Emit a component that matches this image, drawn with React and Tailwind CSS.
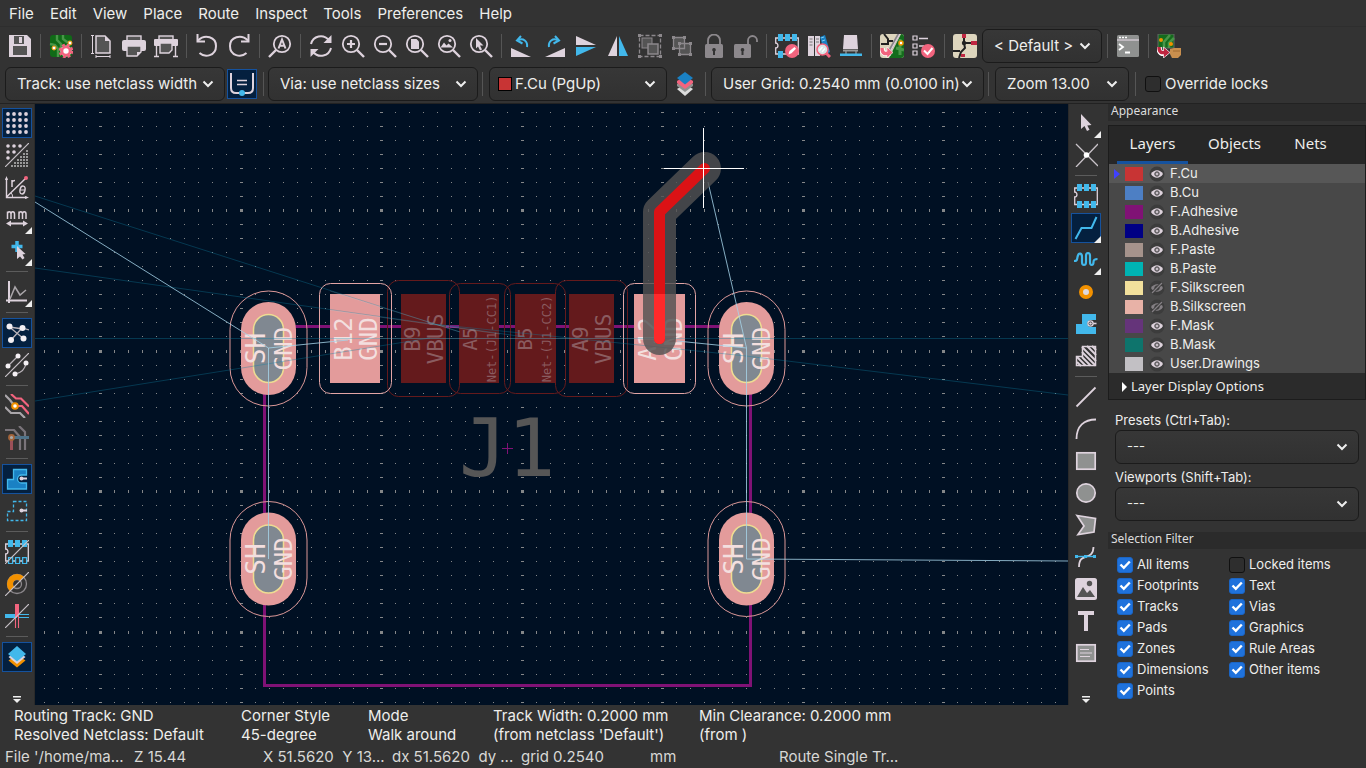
import React from 'react';

const L = '#ded3dd';
const B = '#42b8eb';
const P = '#f2647e';

function Icon({ children, className = 'w-6 h-6' }) {
  return (
    <svg viewBox="0 0 24 24" className={className} fill="none" aria-hidden="true">
      {children}
    </svg>
  );
}

const Lens = ({ children }) => (
  <Icon>
    <circle cx="10" cy="10" r="8.2" stroke={L} strokeWidth="1.8" />
    <path d="M16 16l7 7" stroke={L} strokeWidth="2.4" />
    {children}
  </Icon>
);

const Slash = () => <path d="M0 24L24 0" stroke="#c9c3c9" strokeWidth="1.2" />;

const icons = {
  save: (
    <Icon>
      <path d="M1 1h18l4 4v18H1z" fill={L} />
      <rect x="6" y="2" width="10" height="8" fill="#545454" />
      <rect x="11" y="3" width="3" height="6" fill={L} />
      <rect x="5" y="12" width="14" height="9" fill="#545454" />
    </Icon>
  ),
  board: (
    <Icon>
      <rect x="1" y="1" width="22" height="22" rx="3" fill="#106a17" />
      <path d="M8 1v5l4 4v4M14 1v4l4 3h5M1 10l5 1 3 4v8" stroke="#489648" strokeWidth="2.4" />
      <circle cx="5" cy="14" r="2" fill="#fff" stroke="#f29100" />
      <circle cx="21" cy="9" r="2" fill="#fff" stroke="#f29100" />
      <circle cx="17" cy="17" r="5.6" fill="#fff" stroke={P} strokeWidth="3.4" strokeDasharray="2.6 1.8" />
      <circle cx="17" cy="17" r="4" fill="#fff" stroke={P} strokeWidth="2.6" />
    </Icon>
  ),
  page: (
    <Icon>
      <path d="M6 2h9l5 5v12H6z" fill="#545454" stroke={L} strokeWidth="1.5" />
      <path d="M15 2v5h5z" fill={L} />
      <path d="M1 1.5h3M1 19.5h3M2.5 1v18M6 22.5h14M6 21v3M20 21v3" stroke={L} />
    </Icon>
  ),
  print: (
    <Icon>
      <rect x="5" y="2" width="14" height="5" fill="#545454" stroke={L} strokeWidth="1.4" />
      <rect x="0" y="6" width="24" height="11" rx="2" fill={L} />
      <path d="M5 12h14v6l-4 4H5z" fill="#545454" stroke={L} strokeWidth="1.4" />
      <path d="M19 18h-4v4z" fill={L} />
    </Icon>
  ),
  plot: (
    <Icon>
      <rect x="5" y="2" width="14" height="5" fill="#545454" stroke={L} strokeWidth="1.4" />
      <rect x="0" y="5" width="24" height="7" rx="1" fill={L} />
      <path d="M6 9h12v7l-3 3H6z" fill="#545454" stroke={L} strokeWidth="1.4" />
      <path d="M2.5 12v10M21.5 12v10M0 22.5h5M19 22.5h5" stroke={L} strokeWidth="1.4" />
    </Icon>
  ),
  undo: (
    <Icon>
      <path d="M3 6.5C10-.5 21 3 21 12c0 10-11 12-16.5 7" stroke={L} strokeWidth="2" />
      <path d="M2.5 0v7.5H10" stroke={L} strokeWidth="2" />
    </Icon>
  ),
  redo: (
    <Icon>
      <path d="M21 6.5C14-.5 3 3 3 12c0 10 11 12 16.5 7" stroke={L} strokeWidth="2" />
      <path d="M21.5 0v7.5H14" stroke={L} strokeWidth="2" />
    </Icon>
  ),
  find: (
    <Icon>
      <circle cx="14" cy="10" r="8.2" stroke={L} strokeWidth="1.8" />
      <path d="M8 16l-7 7" stroke={L} strokeWidth="2.4" />
      <path d="M10.5 14.5L14 5.5l3.5 9M11.5 11.7h5" stroke={L} strokeWidth="2" />
    </Icon>
  ),
  refresh: (
    <Icon>
      <path d="M2 10C4 2 14-1 20.5 6.5M22 14C20 22 10 25 3.5 17.5" stroke={L} strokeWidth="2" />
      <path d="M22.500 1v8h-8zM1.500 23v-8h8z" fill={L} />
    </Icon>
  ),
  zoomIn: <Lens><path d="M10 6v8M6 10h8" stroke={L} strokeWidth="2.2" /></Lens>,
  zoomOut: <Lens><path d="M6 10h8" stroke={L} strokeWidth="2.2" /></Lens>,
  zoomFit: <Lens><path d="M6 5h5.5l2.5 2.5V15H6z" fill={L} /></Lens>,
  zoomObj: <Lens><path d="M3.5 13.5l3.5-5 2.5 3 2-2 4.5 4z" fill={L} /><circle cx="13" cy="6.5" r="1.5" fill={L} /></Lens>,
  zoomSel: <Lens><path d="M7 4l7.5 7.5h-3.5l2 4-2 1-2-4-2 2z" fill={L} /></Lens>,
  ccw: (
    <Icon>
      <path d="M1 14v9h20z" fill={L} />
      <path d="M17 13c1-6-4-9-8.5-7" stroke={B} strokeWidth="2" />
      <path d="M11 2L7 6.5l5.5 3" stroke={B} strokeWidth="2" />
    </Icon>
  ),
  cw: (
    <Icon>
      <path d="M23 14v9H3z" fill={L} />
      <path d="M7 13c-1-6 4-9 8.5-7" stroke={B} strokeWidth="2" />
      <path d="M13 2l4 4.5-5.5 3" stroke={B} strokeWidth="2" />
    </Icon>
  ),
  flip: <Icon><path d="M2 2v9h20z" fill={L} /><path d="M2 22v-9h20z" fill={B} /></Icon>,
  mirror: <Icon><path d="M2 22h9V2z" fill={L} /><path d="M22 22h-9V2z" fill={B} /></Icon>,
  group: (
    <Icon>
      <rect x="1.5" y="1.5" width="21" height="21" stroke="#8c888c" strokeWidth="1.3" strokeDasharray="4 2" />
      <path d="M0 0h3v3H0zM21 0h3v3h-3zM0 21h3v3H0zM21 21h3v3h-3z" fill="#8c888c" />
      <rect x="4" y="4" width="10" height="10" fill="#545454" stroke="#8c888c" />
      <rect x="10" y="10" width="10" height="10" fill="#545454" stroke="#8c888c" strokeWidth="1.5" />
    </Icon>
  ),
  ungroup: (
    <Icon>
      <path d="M3.5 3.5h11v11h-11zM9.5 9.5h11v11h-11z" fill="#545454" stroke="#8c888c" strokeWidth="1.3" />
      <path d="M2 2h3v3H2zM13 2h3v3h-3zM2 13h3v3H2zM8 8h3v3H8zM19 8h3v3h-3zM8 19h3v3H8zM19 19h3v3h-3z" fill="#8c888c" />
    </Icon>
  ),
  lock: (
    <Icon>
      <path d="M6 12V6.5a6 6 0 0112 0V12" stroke="#8c888c" strokeWidth="1.8" />
      <rect x="3" y="10" width="18" height="14" rx="1.5" fill="#8c888c" />
      <path d="M12 14a1.8 1.8 0 011 3.3V21h-2v-3.7A1.8 1.8 0 0112 14z" fill="#333" />
    </Icon>
  ),
  unlock: (
    <Icon>
      <path d="M14 12V6.500a4.500 4.500 0 019 0V8" stroke="#8c888c" strokeWidth="1.8" />
      <rect x="0" y="10" width="17" height="14" rx="1.5" fill="#8c888c" />
      <path d="M8.5 14a1.8 1.8 0 011 3.3V21h-2v-3.7A1.8 1.8 0 018.5 14z" fill="#333" />
    </Icon>
  ),
  fpEdit: (
    <Icon>
      <path d="M.7 4v5c3 0 3 5 0 5v6h22.600V4z" stroke={L} strokeWidth="1.3" />
      <path d="M3 0h5v7H3zM10 0h5v7h-5zM17 0h5v7h-5zM3 17h5v7H3z" fill={B} />
      <circle cx="17" cy="17" r="7" fill={P} />
      <path d="M13.5 20.5l1-3.5 5-4 1.5 1.7-4.5 4.6z" fill="#fff" />
    </Icon>
  ),
  libs: (
    <Icon>
      <path d="M1 2h6v20H1zM8 2h5v20H8z" fill={L} />
      <path d="M2.5 5h3M2.5 8h3M9 5h3M9 8h3M2.5 11h3" stroke="#777" />
      <path d="M13 3l5-2 5 17-5 3z" fill="#1a81c4" />
      <path d="M14 4l3-1M15 7l3-1" stroke="#7fd0f5" />
      <path d="M19 19l4 4" stroke={P} strokeWidth="3" />
      <circle cx="15.5" cy="15.5" r="5.5" fill="#d8e6e8" stroke={P} strokeWidth="1.5" />
      <path d="M12.5 16.5l3-3.5M15 18l3-3.5" stroke="#fff" strokeWidth="1.3" />
    </Icon>
  ),
  model3d: (
    <Icon>
      <path d="M7 16v5M17 16v5" stroke="#888" strokeWidth="1.5" />
      <path d="M5 1h13l1 14H4z" fill={L} />
      <path d="M4 15.5h15v2H4z" fill="#999" />
      <path d="M1 19.5h22V22H1z" fill={B} />
    </Icon>
  ),
  updatePcb: (
    <Icon>
      <rect x="0" y="0" width="24" height="24" rx="3" fill="#ddd5bd" />
      <path d="M21 0a3 3 0 013 3v18a3 3 0 01-3 3H9z" fill="#146c1c" />
      <path d="M20 5v16M16 14l8 2" stroke="#489648" strokeWidth="3" />
      <path d="M4 0l4 5v5H1M8 7h5" stroke="#222" strokeWidth="2" />
      <path d="M19 0L10 16" stroke="#8a868a" strokeWidth="3" />
      <path d="M20 0L11 16" stroke={L} strokeWidth="1.3" />
      <circle cx="21" cy="9" r="2" fill="#fff" stroke="#f29100" strokeWidth="1.5" />
      <path d="M2 14c0 6 4 6 8 5" stroke="#fff" strokeWidth="5.5" />
      <path d="M7 13l6 5.5-6 5.5z" fill={P} stroke="#fff" strokeWidth=".6" />
      <path d="M2 14c0 6 3 6 7 5" stroke={P} strokeWidth="3.4" />
    </Icon>
  ),
  drc: (
    <Icon>
      <path d="M1 2h4v4H1zM1 10h4v4H1zM1 17h4v4H1z" stroke={L} strokeWidth="1.2" />
      <path d="M7 4.5h9M7 12h5" stroke={L} strokeWidth="1.5" />
      <circle cx="16" cy="17" r="7" fill={P} />
      <path d="M12 16.5l3.5 3.5 5-6" stroke="#fff" strokeWidth="2" />
    </Icon>
  ),
  schematic: (
    <Icon>
      <rect x="0" y="0" width="24" height="24" rx="3" fill="#ddd5bd" />
      <path d="M11 4v5l1 5-4 4-2 6M11 9h8M0 17h7" stroke="#222" strokeWidth="2" />
      <path d="M9 0h4v4H9zM18 7h6v4h-6zM8 20h4v3H8z" fill="#bf2641" />
      <circle cx="11" cy="9" r="2.2" fill="#222" />
    </Icon>
  ),
  console: (
    <Icon>
      <rect x="1" y="1" width="22" height="22" rx="1.5" fill="#8f9190" />
      <path d="M1 6h22" stroke={L} strokeWidth="1.2" />
      <path d="M3 3.5h2M6 3.5h2M9 3.5h2" stroke="#fff" strokeWidth="1.5" />
      <path d="M3 10l4 3-4 3M9 18.5h5" stroke="#fff" strokeWidth="1.8" />
    </Icon>
  ),
  plugin: (
    <Icon>
      <path d="M1 0h16v14H1z" fill="#146c1c" stroke="#666" />
      <path d="M7 14V8l6-7M12 14V9l5-5" stroke="#489648" strokeWidth="2.5" />
      <circle cx="4" cy="6" r="2" fill="#f29100" />
      <circle cx="14" cy="10" r="2" fill="#f29100" />
      <path d="M2 13c0 6 3 7 7 6" stroke="#fff" strokeWidth="5.5" />
      <path d="M6.5 13l6.5 5.5-6.5 5.5z" fill="#bf2641" stroke="#fff" strokeWidth=".7" />
      <path d="M2 13c0 6 3 6 6 5.5" stroke="#bf2641" strokeWidth="3.4" />
      <path d="M13 15l4-1h7v7l-3 3h-6l-2-4z" fill="#c98f4e" />
      <path d="M16 17h7" stroke="#a06a30" />
    </Icon>
  ),
  autoWidth: (
    <Icon>
      <path d="M1 1v15c0 4 2 5 5 5h12c3 0 5-1 5-5V1" stroke={L} strokeWidth="2" />
      <path d="M7 8.5h10M7 12.5h10" stroke={L} strokeWidth="1.3" />
      <circle cx="12" cy="21" r="3" fill={B} />
    </Icon>
  ),
  layerPair: (
    <Icon>
      <path d="M4 17l8-5 8 5-8 7z" fill="#dcdcdc" />
      <path d="M4 12l8-5 8 5v2l-8 6-8-6z" fill="#8f9190" />
      <path d="M4 9l8-5 8 5v2l-8 6-8-6z" fill={P} />
      <path d="M12 0l8 6-8 6.5L4 6z" fill="#1a81c4" />
    </Icon>
  ),
  grid: (
    <Icon>
      {[3, 9, 15, 21].map((y) => [3, 9, 15, 21].map((x) => <circle key={`${x}-${y}`} cx={x} cy={y} r="1.9" fill={L} />))}
    </Icon>
  ),
  gridOver: (
    <Icon>
      <path d="M3 3h.01M9 3h.01M15 3h.01M3 9h.01M9 9h.01M3 15h.01" stroke={L} strokeWidth="3.6" strokeLinecap="round" />
      {[[22, 7], [19, 10], [16, 13], [13, 16], [10, 19], [7, 22]].map(([x, y], i) => (
        <path key={i} d={`M${x} ${y}v${24 - y}`} stroke="#999" strokeWidth="2" strokeDasharray="2 1" />
      ))}
      <Slash />
    </Icon>
  ),
  polar: (
    <Icon>
      <path d="M1.5 3v19.5H22M1.5 22L21 3" stroke={L} strokeWidth="1.4" />
      <path d="M0 5l1.5-4L3 5zM20 21l4 1.5-4 1.5z" fill={L} />
      <path d="M7 12V5M7 7c1-1.5 2-1.5 3-1.5" stroke={L} strokeWidth="1.5" />
      <ellipse cx="17.5" cy="15" rx="2.5" ry="4" stroke={L} strokeWidth="1.4" transform="rotate(12 17.5 15)" />
      <path d="M15 15h5M6 18c1.5 1 1.5 3 1.5 4" stroke={L} />
      <circle cx="21" cy="3" r="2" fill={P} />
    </Icon>
  ),
  mm: (
    <Icon>
      <path d="M2.5 12V4.5M2.5 7c0-3 3.5-3 3.5 0v5M6 7c0-3 3.5-3 3.5 0v5M14 12V4.5M14 7c0-3 3.5-3 3.5 0v5M17.5 7c0-3 3.5-3 3.5 0v5" stroke={L} strokeWidth="1.5" />
      <path d="M5 16.5h14" stroke={L} strokeWidth="2" />
      <path d="M1 16.5l5-3v6zM23 16.5l-5-3v6z" fill={L} />
    </Icon>
  ),
  cursor: (
    <Icon>
      <path d="M12 2v11M6.5 7.5h11" stroke={B} strokeWidth="3.5" />
      <path d="M12 7v13l3-2.5 2.5 3 2-1.500-2-3.500 3-.5z" fill={L} />
    </Icon>
  ),
  plotLine: (
    <Icon>
      <path d="M4 1v22M1 20.5h21" stroke={L} strokeWidth="2" />
      <path d="M5 19l5-12 5 8 6-5" stroke="#aaa6aa" strokeWidth="1.5" />
    </Icon>
  ),
  ratsnest: (
    <Icon>
      <path d="M4.5 6l13.5 2M4.5 6L19 18M6 19L17 7l7 2" stroke="#b9b3b9" strokeWidth="1.3" />
      {[[4.5, 5.5], [17.5, 7], [6, 19], [18.5, 17.5]].map(([x, y]) => <circle key={x} cx={x} cy={y} r="3" fill="#f4f0f4" />)}
    </Icon>
  ),
  curved: (
    <Icon>
      <path d="M3 13l10-10M10 21c6-1 10-4 11-11" stroke="#b9b3b9" strokeWidth="1.3" />
      {[[3, 13], [13, 3], [10, 21], [21, 10]].map(([x, y]) => <circle key={x} cx={x} cy={y} r="2.5" fill="#f4f0f4" />)}
      <Slash />
    </Icon>
  ),
  dimNets: (
    <Icon>
      <path d="M6 0l5 4.5h5l8 8M10 12h7l7 8" stroke={P} strokeWidth="2.2" />
      <path d="M0 1l5 5 3 4M0 13l6 6h9l5 5" stroke="#aaa6aa" strokeWidth="2.2" />
      <circle cx="10" cy="12" r="2.8" fill="#fff" stroke="#f29100" strokeWidth="2" />
    </Icon>
  ),
  dimLayers: (
    <Icon>
      <path d="M0 4h9l6 7v13M14 0l6 6v18" stroke="#7a747a" strokeWidth="2.2" />
      <path d="M6.5 13v11" stroke="#9c5058" strokeWidth="3" />
      <path d="M9 11.5h15" stroke="#4f7288" strokeWidth="3" />
      <circle cx="6.5" cy="11.5" r="2.5" fill="#aaa" stroke="#a3643a" strokeWidth="1.8" />
    </Icon>
  ),
  zoneFill: (
    <Icon>
      <path d="M8.5 2.5h13V8h-5a4 4 0 000 8h5v6h-19V12.5h6z" fill="#1a81c4" stroke={B} strokeWidth="1.3" />
      <path d="M16 11.5h6" stroke={L} strokeWidth="2" />
      <circle cx="16.5" cy="11.5" r="2" fill={L} />
    </Icon>
  ),
  zoneOutline: (
    <Icon>
      <path d="M8.5 2.5h13v19h-19v-9h6z" stroke={B} strokeWidth="1.3" strokeDasharray="3 2" />
      <path d="M16 11.5h6" stroke={L} strokeWidth="2" />
      <circle cx="16.5" cy="11.5" r="2" fill={L} />
    </Icon>
  ),
  padOutline: (
    <Icon>
      <path d="M.7 4v5c3 0 3 5 0 5v7h22.600V4z" stroke={L} strokeWidth="1.3" />
      <path d="M3 0h5v7H3zM10 0h5v7h-5zM17 0h5v7h-5z" fill={B} />
      <path d="M3.600 17.600h4v6h-4zM10.600 17.600h4v6h-4zM17.600 17.600h4v6h-4z" fill="#333" stroke={B} strokeWidth="1.3" />
      <Slash />
    </Icon>
  ),
  viaOutline: (
    <Icon>
      <circle cx="12" cy="12" r="9.5" stroke="#8c888c" strokeWidth="1.3" />
      <circle cx="12" cy="12" r="4.5" stroke="#8c888c" strokeWidth="1.3" />
      <path d="M7 17A7 7 0 0117 7" stroke="#f29100" strokeWidth="6" />
      <Slash />
    </Icon>
  ),
  trackOutline: (
    <Icon>
      <path d="M0 12h12" stroke={B} strokeWidth="4" />
      <path d="M12 0v13" stroke={P} strokeWidth="4" />
      <path d="M13 10.5h11M13 13.5h11" stroke={B} strokeWidth="1.1" />
      <path d="M10.5 14v10M13.5 12v12" stroke={P} strokeWidth="1.1" />
      <Slash />
    </Icon>
  ),
  contrast: (
    <Icon>
      <path d="M3.500 15.500l8.500 7 8.500-7-8.500-6z" fill="#f29100" />
      <path d="M3.500 12l8.500 7 8.500-7-8.500-6z" fill={L} />
      <path d="M12 1l9 8-9 7.5L3 9z" fill={B} />
    </Icon>
  ),
  select: <Icon><path d="M7 3v15l3.500-3 2.500 5 2.500-1.300-2.200-4.200 4.200-.5z" fill={L} /></Icon>,
  highlight: (
    <Icon>
      <path d="M2 1l22 22M24 1L2 24" stroke="#c9c3c9" strokeWidth="1.3" />
      <circle cx="12.5" cy="12" r="2.8" fill="#fff" />
    </Icon>
  ),
  footprint: (
    <Icon>
      <path d="M.7 4v4c3 0 3 5 0 5v7.500h22.600V4z" stroke={L} strokeWidth="1.3" />
      <path d="M3 0h5v7H3zM10 0h5v7h-5zM17 0h5v7h-5zM3 17h5v7H3zM10 17h5v7h-5zM17 17h5v7h-5z" fill={B} />
    </Icon>
  ),
  route: <Icon><path d="M1.500 23l6-11h10l5-11" stroke={B} strokeWidth="2" /></Icon>,
  tune: (
    <Icon>
      <path d="M0 13c3 0 3-1 3.500-4C4.500 4 8 5 8 9v5c0 4 4 4 4 0V8c0-4 4-4 4 0v6c0 4 3.500 4 3.500 0 0-2 1-3 4-3" stroke={B} strokeWidth="2.2" />
    </Icon>
  ),
  via: <Icon><circle cx="12" cy="12" r="5" fill="#ded9de" stroke="#f29100" strokeWidth="4" /></Icon>,
  zone: (
    <Icon>
      <path d="M8 2h14v6h-5a3.500 3.500 0 000 7h5v7H2V12h6z" fill={B} />
      <path d="M16.500 11.500h6" stroke={L} strokeWidth="1.6" />
      <circle cx="16.5" cy="11.5" r="2.6" fill="#333" stroke={L} strokeWidth="1.3" />
      <circle cx="16.5" cy="11.5" r="1.3" fill={L} />
    </Icon>
  ),
  ruleArea: (
    <Icon>
      <path d="M8.5 2.5h13v19h-19v-9h6z" stroke={L} strokeWidth="1.5" />
      <path d="M8 3l14 14M8 8l13.500 13.500M13 2l9 9M18 2l4 4M8 13l8.500 8.500M3 13l8.500 8.500M3 18l4 4" stroke={L} strokeWidth="2" />
    </Icon>
  ),
  line: <Icon><path d="M2.500 21.500l19-19" stroke={L} strokeWidth="1.8" /></Icon>,
  arc: <Icon><path d="M2.500 22C2.500 9 10 2.500 22 2.500" stroke={L} strokeWidth="1.8" /></Icon>,
  rect: <Icon><rect x="2.8" y="3.8" width="18.4" height="16.4" fill="#8f9190" stroke={L} strokeWidth="1.7" /></Icon>,
  circle: <Icon><circle cx="12" cy="12" r="9.2" fill="#8f9190" stroke={L} strokeWidth="1.7" /></Icon>,
  polygon: <Icon><path d="M3 2.500l18.500 3L20 19 4 21.500 10 13z" fill="#8f9190" stroke={L} strokeWidth="1.7" /></Icon>,
  bezier: (
    <Icon>
      <path d="M5 22C5 6 19 17 19.500 2" stroke={L} strokeWidth="1.8" />
      <path d="M2 11.500h20" stroke={B} strokeWidth="1.4" />
      <path d="M1 10h3v3H1zM10 10h3v3h-3zM19 10h3v3h-3z" fill={B} />
    </Icon>
  ),
  image: (
    <Icon>
      <rect x="1" y="1" width="22" height="22" rx="2.5" fill={L} />
      <path d="M3 20l6-10 4 6 3-3 5 7z" fill="#545454" />
      <circle cx="15.5" cy="6.5" r="2.7" fill="#545454" />
    </Icon>
  ),
  text: <Icon><path d="M4 2h16v4h-6v16h-4V6H4z" fill={L} /></Icon>,
  textBox: (
    <Icon>
      <rect x="2.8" y="3.8" width="18.4" height="16.4" fill="#8f9190" stroke={L} strokeWidth="1.7" />
      <path d="M6 8.500h9M6 12h12M6 15.500h10" stroke={L} strokeWidth="1.1" />
    </Icon>
  ),
};

function Tool({ icon, label, active, more }) {
  return (
    <button type="button" aria-label={label} className="relative flex h-8 w-8 shrink-0 items-center justify-center">
      <span className={active ? 'flex h-[30px] w-[30px] items-center justify-center border border-[#15529e] bg-[#04203f]' : 'flex'}>
        {icons[icon]}
      </span>
      {more && (
        <svg viewBox="0 0 7 7" className="absolute right-px bottom-px h-[7px] w-[7px]" aria-hidden="true">
          <path d="M7 0v7H0z" fill="#eee" />
        </svg>
      )}
    </button>
  );
}

const VSep = () => <div className="flex w-[9px] shrink-0 justify-center"><div className="h-6 w-px bg-[#555]" /></div>;
const HSep = () => <div className="flex h-[9px] w-full shrink-0 items-center justify-center"><div className="h-px w-[22px] bg-[#5c5c5c]" /></div>;

function Combo({ label, value, className, swatch }) {
  return (
    <div className={`relative flex shrink-0 items-center ${className}`}>
      <select
        aria-label={label}
        className={`h-[34px] w-full appearance-none rounded-md border border-[#1b1b1b] bg-linear-to-b from-[#373737] to-[#313131] ${swatch ? 'pl-[25px]' : 'pl-[11px]'} text-inherit outline-none`}
      >
        <option>{value}</option>
      </select>
      {swatch && <span className="absolute left-[9px] h-[14px] w-[14px] border border-black bg-[#c83434]" />}
      <svg viewBox="0 0 12 8" className="pointer-events-none absolute right-[11px] h-2 w-3" fill="none" aria-hidden="true">
        <path d="M1.500 1.500L6 6l4.500-4.500" stroke="#eee" strokeWidth="2" />
      </svg>
    </div>
  );
}

function Check({ label, checked }) {
  return (
    <label className="flex items-center gap-1">
      <span className="relative flex h-4 w-4">
        <input
          type="checkbox"
          defaultChecked={checked}
          className="peer h-4 w-4 appearance-none rounded-[3px] border border-[#101010] bg-[#2e2e2e] checked:border-[#1b65c4] checked:bg-[#1f72dc]"
        />
        <svg viewBox="0 0 16 16" className="pointer-events-none absolute inset-0 hidden h-4 w-4 peer-checked:block" fill="none" aria-hidden="true">
          <path d="M3.500 7.500L6.800 10.800l6-6.300" stroke="#fff" strokeWidth="2.4" />
        </svg>
      </span>
      <span className="whitespace-nowrap">{label}</span>
    </label>
  );
}

const topRow = [
  'save:Save', '|', 'board:Board setup', '|', 'page:Page settings', 'print:Print', 'plot:Plot', '|', 'undo:Undo', 'redo:Redo', '|',
  'find:Find', '|', 'refresh:Refresh', 'zoomIn:Zoom in', 'zoomOut:Zoom out', 'zoomFit:Zoom to fit', 'zoomObj:Zoom to objects', 'zoomSel:Zoom to selection', '|',
  'ccw:Rotate counterclockwise', 'cw:Rotate clockwise', 'flip:Mirror vertically', 'mirror:Mirror horizontally', 'group:Group', 'ungroup:Ungroup', 'lock:Lock', 'unlock:Unlock', '|',
  'fpEdit:Footprint editor', 'libs:Footprint library browser', 'model3d:3D viewer', '|', 'updatePcb:Update PCB from schematic', 'drc:Design rules checker', '|', 'schematic:Schematic editor',
];
const leftCol = [
  'grid:Show grid:a', 'gridOver:Grid overrides', 'polar:Polar coordinates', 'mm:Millimeters::m', 'cursor:Cursor shape::m', '|', 'plotLine:Line mode::m', '|',
  'ratsnest:Show ratsnest:a', 'curved:Curved ratsnest', '|', 'dimNets:Net colors', 'dimLayers:Inactive layers', '|', 'zoneFill:Zone fills:a', 'zoneOutline:Zone outlines', '|',
  'padOutline:Sketch pads', 'viaOutline:Sketch vias', 'trackOutline:Sketch tracks', '|', 'contrast:Layers manager:a',
];
const rightCol = [
  'select:Select::m', 'highlight:Highlight net', '|', 'footprint:Place footprint', 'route:Route track:a:m', 'tune:Tune length::m', 'via:Place via', 'zone:Draw zone', 'ruleArea:Draw rule area', '|',
  'line:Line', 'arc:Arc', 'rect:Rectangle', 'circle:Circle', 'polygon:Polygon', 'bezier:Bezier', 'image:Image', 'text:Text', 'textBox:Text box',
];

function tools(list, Sep) {
  return list.map((item, i) => {
    if (item === '|') return <Sep key={i} />;
    const [icon, label, active, more] = item.split(':');
    return <Tool key={i} icon={icon} label={label} active={active === 'a'} more={more === 'm'} />;
  });
}

const Overflow = () => (
  <button type="button" aria-label="More tools" className="mt-auto mb-px flex h-2 w-2">
    <svg viewBox="0 0 8 8" className="h-2 w-2" aria-hidden="true"><path d="M0 0h8v1.500H0zM0 3h8L4 7z" fill="#eee" /></svg>
  </button>
);

/* Board canvas */
const STEP = 14.05;
let gridPath = '';
for (let i = -5; i < 170; i++) {
  for (let j = -8; j < 110; j++) {
    const x = Math.round(100 + i * STEP);
    const y = Math.round(210 + j * STEP);
    const w = i % 10 === 0 ? 3 : 1;
    const h = j % 10 === 0 ? 3 : 1;
    gridPath += `M${x - (w - 1) / 2} ${y - (h - 1) / 2}h${w}v${h}h${-w}z`;
  }
}

const PadText = ({ x, y, size, fill = '#f3dfdf', children }) => (
  <text transform={`translate(${x} ${y}) rotate(-90)`} fontSize={size} fill={fill} textAnchor="middle">{children}</text>
);

const OvalPad = ({ x, y }) => (
  <g>
    <rect x={x - 38.5} y={y - 57.5} width="77" height="115" rx="38.5" fill="none" stroke="#dc9898" />
    <rect x={x - 27.5} y={y - 46.5} width="55" height="93" rx="27.5" fill="#e39b9b" />
    <rect x={x - 15} y={y - 34} width="30" height="68" rx="15" fill="#808891" stroke="#eedc92" strokeWidth="1.5" />
    <PadText x={x - 4} y={y} size="26">SH</PadText>
    <PadText x={x + 23.5} y={y} size="24">GND</PadText>
  </g>
);

function Pad({ x, w, cx, cw, tall, dim, num, net, numX, netX, numSize, netSize }) {
  return (
    <g>
      <rect x={cx} y={tall ? 280.5 : 283.5} width={cw} height={tall ? 116 : 110} rx="11" fill="none" stroke={dim ? '#641a1c' : '#e3a5a5'} />
      <rect x={x} y="294" width={w} height="89" fill={dim ? '#641a1c' : '#e39b9b'} />
      <PadText x={numX} y="339" size={numSize} fill={dim ? '#8a5c60' : '#f3dfdf'}>{num}</PadText>
      <PadText x={netX} y="339" size={netSize} fill={dim ? '#8a5c60' : '#f3dfdf'}>{net}</PadText>
    </g>
  );
}

function Board() {
  return (
    <svg className="block h-full w-full" role="img" aria-label="Board" fontFamily='"DejaVu Sans Mono", monospace'>
      <g transform="translate(-35 -104)">
        <path d={gridPath} fill="#858789" shapeRendering="crispEdges" />
        <rect x="264.5" y="326.5" width="486" height="359" fill="none" stroke="#801275" strokeWidth="3" />
        <OvalPad x={268.5} y={348.5} />
        <OvalPad x={746.5} y={348.5} />
        <OvalPad x={268.5} y={559} />
        <OvalPad x={746.5} y={559} />
        <Pad x={401} w={45} cx={387.5} cw={72} tall dim num="B9" net="VBUS" numX={420} netX={443} numSize="21" netSize="21" />
        <Pad x={460} w={39} cx={449.5} cw={61} dim num="A5" net="Net-(J1-CC1)" numX={477} netX={496} numSize="19" netSize="12" />
        <Pad x={515} w={40} cx={504.5} cw={61} dim num="B5" net="Net-(J1-CC2)" numX={532} netX={551} numSize="19" netSize="12" />
        <Pad x={569} w={45} cx={555.5} cw={72} tall dim num="A9" net="VBUS" numX={588} netX={611} numSize="21" netSize="21" />
        <Pad x={330} w={50} cx={319.5} cw={72} num="B12" net="GND" numX={352} netX={377} numSize="24" netSize="24" />
        <Pad x={634} w={51} cx={623.5} cw={72} num="A12" net="GND" numX={656} netX={682} numSize="24" netSize="24" />
        <g stroke="#0d7fa0" strokeOpacity="0.36" fill="none">
          <path d="M35 196L460 332M35 268L525 337M35 338.500H1068M35 401L430 338" />
          <path d="M432 324L600 341L746 356L1068 395" />
        </g>
        <g stroke="#ffffff" strokeOpacity="0.14" fill="none">
          <path d="M330 291L460 332M330 310L500 334M330 338.500H685" />
        </g>
        <g stroke="#a6d4ea" strokeOpacity="0.8" fill="none">
          <path d="M35 202L268.500 348L348 340M268.500 348V559M677 341L746.500 348V559L1068 561M708 182L746.500 348" />
        </g>
        <text x="459" y="476" fontSize="80" fill="#565656">J1</text>
        <path d="M502 448.500h11M507.500 443v11" stroke="#801275" />
        <path d="M659.500 338.500V212L704.500 168.500" fill="none" stroke="#525252" strokeOpacity="0.82" strokeWidth="33" strokeLinecap="round" strokeLinejoin="round" />
        <path d="M659.500 338.500V212L704.500 168.500" fill="none" stroke="#db1215" strokeWidth="11" strokeLinecap="round" strokeLinejoin="round" />
        <path d="M654 294h11v44.500a5.500 5.500 0 01-11 0z" fill="#ff2a2b" />
        <path d="M703.500 128v80M664 168.500h80" stroke="#fff" />
      </g>
    </svg>
  );
}

const layers = [
  ['F.Cu', 'bg-[#c83434]', true],
  ['B.Cu', 'bg-[#4d7fc4]', true],
  ['F.Adhesive', 'bg-[#801275]', true],
  ['B.Adhesive', 'bg-[#000084]', true],
  ['F.Paste', 'bg-[#a5938c]', true],
  ['B.Paste', 'bg-[#00b4b4]', true],
  ['F.Silkscreen', 'bg-[#f2e09c]', false],
  ['B.Silkscreen', 'bg-[#e8b2a7]', false],
  ['F.Mask', 'bg-[#65347a]', true],
  ['B.Mask', 'bg-[#0e746c]', true],
  ['User.Drawings', 'bg-[#c2c0c4]', true],
];

const Eye = ({ on }) => (
  <svg viewBox="0 0 16 16" className="h-4 w-4" fill="none" aria-hidden="true">
    <circle cx="8" cy="8" r="7.5" fill="#3c3c3c" />
    <path d="M2 8c3-5 9-5 12 0-3 5-9 5-12 0z" fill={on ? L : '#858085'} />
    <circle cx="8" cy="8" r="2.3" fill={on ? '#857f85' : '#3c3c3c'} stroke="#444" strokeWidth="0.8" />
    {on ? <circle cx="8" cy="8" r="1" fill={L} /> : <path d="M3 13L13 3" stroke="#3c3c3c" strokeWidth="3" />}
    {!on && <path d="M3 13L13 3" stroke="#858085" strokeWidth="1.3" />}
  </svg>
);

function PanelTitle({ children }) {
  return <h2 className="h-[17px] bg-[#2b2b2b] pl-[3px] font-['Noto_Sans',sans-serif] text-[12px] leading-[13px] text-[#ddd]">{children}</h2>;
}

function Appearance() {
  return (
    <aside className="flex w-[258px] shrink-0 flex-col text-[13px]">
      <PanelTitle>Appearance</PanelTitle>
      <div className="mt-1 border border-[#1c1c1c] bg-[#272727]">
        <div className="flex h-[38px] pl-2 font-['Noto_Sans',sans-serif] text-[15px]">
          <button type="button" className="w-[71px] border-b-[3px] border-[#15529e]">Layers</button>
          <button type="button" className="w-[93px] pb-[3px]">Objects</button>
          <button type="button" className="w-[59px] pb-[3px]">Nets</button>
        </div>
        <ul className="bg-[#484848]">
          {layers.map(([name, color, on], i) => (
            <li key={name} className={`flex h-[19px] items-center pl-[5px] ${i === 0 ? 'bg-[#575757]' : ''}`}>
              <svg viewBox="0 0 6 10" className="mr-[5px] h-[10px] w-[6px]" aria-hidden="true">
                {i === 0 && <path d="M0 0l6 5-6 5z" fill="#4040ff" />}
              </svg>
              <span className={`mr-[6px] h-[14px] w-[18px] ${color}`} />
              <button type="button" aria-label={`Toggle ${name}`} className="mr-[5px] flex">
                <Eye on={on} />
              </button>
              {name}
            </li>
          ))}
        </ul>
        <button type="button" className="flex h-[26px] w-full items-center gap-1 bg-[#2b2b2b] pt-[2px] pl-[13px] font-['Noto_Sans',sans-serif]">
          <svg viewBox="0 0 5 10" className="h-[10px] w-[5px]" aria-hidden="true"><path d="M0 0l5 5-5 5z" fill="#fff" /></svg>
          Layer Display Options
        </button>
      </div>
      <div className="flex flex-col px-[7px] pt-[10px] pb-[11px]">
        <span className="leading-5">Presets (Ctrl+Tab):</span>
        <Combo label="Presets (Ctrl+Tab)" value="---" className="w-full" />
        <span className="mt-[3px] leading-5">Viewports (Shift+Tab):</span>
        <Combo label="Viewports (Shift+Tab)" value="---" className="w-full" />
      </div>
      <PanelTitle>Selection Filter</PanelTitle>
      <div className="grid grid-cols-[112px_1fr] pt-[5px] pl-[9px] leading-[21px]">
        <Check label="All items" checked />
        <Check label="Locked items" />
        <Check label="Footprints" checked />
        <Check label="Text" checked />
        <Check label="Tracks" checked />
        <Check label="Vias" checked />
        <Check label="Pads" checked />
        <Check label="Graphics" checked />
        <Check label="Zones" checked />
        <Check label="Rule Areas" checked />
        <Check label="Dimensions" checked />
        <Check label="Other items" checked />
        <Check label="Points" checked />
      </div>
    </aside>
  );
}

const Message = ({ a, b, className }) => (
  <div className={`shrink-0 whitespace-nowrap ${className}`}>
    <div>{a}</div>
    <div>{b}</div>
  </div>
);

export default function App() {
  return (
    <div className="flex h-screen flex-col overflow-hidden bg-[#333] font-['Inter',sans-serif] text-[15px] text-[#eeeeec]">
      <nav className="flex h-[27px] shrink-0 items-center gap-4 border-b border-[#2e2e2e] pt-[2px] pl-[9px]">
        {['File', 'Edit', 'View', 'Place', 'Route', 'Inspect', 'Tools', 'Preferences', 'Help'].map((m) => (
          <button key={m} type="button">{m}</button>
        ))}
      </nav>
      <div className="flex h-[38px] shrink-0 items-center pl-1">
        {tools(topRow, VSep)}
        <Combo label="Layer preset" value="< Default >" className="mr-px ml-px w-[120px]" />
        <VSep />
        <Tool icon="console" label="Scripting console" />
        <VSep />
        <Tool icon="plugin" label="Plugin" />
      </div>
      <div className="flex h-[39px] shrink-0 items-center border-b border-[#222] pl-[5px]">
        <Combo label="Track width" value="Track: use netclass width" className="w-[220px]" />
        <span className="mx-px flex"><Tool icon="autoWidth" label="Use existing track width" active /></span>
        <VSep />
        <Combo label="Via size" value="Via: use netclass sizes" className="w-[210px]" />
        <VSep />
        <Combo label="Layer" value="F.Cu (PgUp)" className="mx-[2px] w-[178px]" swatch />
        <Tool icon="layerPair" label="Layer pair" />
        <VSep />
        <Combo label="Grid" value="User Grid: 0.2540 mm (0.0100 in)" className="ml-px w-[273px]" />
        <VSep />
        <Combo label="Zoom" value="Zoom 13.00" className="mx-[2px] w-[134px]" />
        <VSep />
        <div className="ml-[5px]"><Check label="Override locks" /></div>
      </div>
      <main className="flex min-h-0 flex-1">
        <div className="flex w-[35px] shrink-0 flex-col items-center border-r border-[#2a2a2a] pt-[3px]">
          {tools(leftCol, HSep)}
          <Overflow />
        </div>
        <div className="min-w-0 flex-1 overflow-hidden bg-[#001023]">
          <Board />
        </div>
        <div className="flex w-[40px] shrink-0 flex-col items-center border-l border-[#2a2a2a] pt-[3px] pr-[5px]">
          {tools(rightCol, HSep)}
          <Overflow />
        </div>
        <Appearance />
      </main>
      <footer className="shrink-0">
        <div className="flex h-10 pt-px pl-[14px] leading-[19px]">
          <Message a="Routing Track: GND" b="Resolved Netclass: Default" className="w-[227px]" />
          <Message a="Corner Style" b="45-degree" className="w-[127px]" />
          <Message a="Mode" b="Walk around" className="w-[125px]" />
          <Message a="Track Width: 0.2000 mm" b="(from netclass 'Default')" className="w-[206px]" />
          <Message a="Min Clearance: 0.2000 mm" b="(from )" className="w-[220px]" />
        </div>
        <div className="flex h-[23px] items-center pt-px pl-[5px] text-[#d8d8d6]">
          {["File '/home/ma...", 'Z 15.44', 'X 51.5620  Y 13...', 'dx 51.5620  dy ...', 'grid 0.2540', 'mm', 'Route Single Tr...'].map((s) => (
            <span key={s} className="w-[129px] shrink-0 whitespace-pre">{s}</span>
          ))}
        </div>
      </footer>
    </div>
  );
}
